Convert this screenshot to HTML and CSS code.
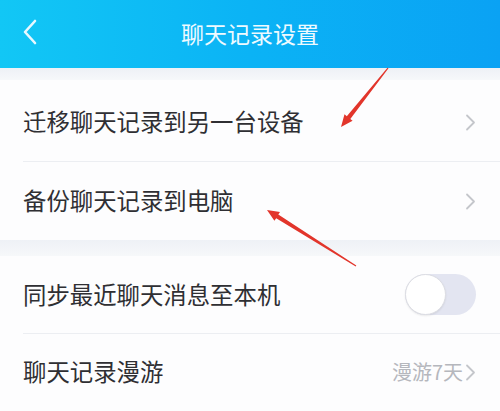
FILE: index.html
```html
<!DOCTYPE html>
<html lang="zh">
<head>
<meta charset="utf-8">
<link rel="stylesheet" href="styles.css">
</head>
<body>
<div class="page">
  <header class="topbar">
    <svg class="back" width="16" height="26" viewBox="0 0 16 26"><path d="M13 2 L3 13 L13 24" fill="none" stroke="#e8f8ff" stroke-width="2.6" stroke-linecap="round" stroke-linejoin="round"/></svg>
    <h1 class="title">聊天记录设置</h1>
  </header>
  <div class="gap gap-top"></div>
  <section class="group">
    <div class="row row-1">
      <span class="label">迁移聊天记录到另一台设备</span>
      <svg class="chev" width="11" height="17" viewBox="0 0 11 17"><path d="M2 1.5 L9 8.5 L2 15.5" fill="none" stroke="#c4c6cb" stroke-width="1.8" stroke-linecap="round" stroke-linejoin="round"/></svg>
    </div>
    <div class="row row-2">
      <span class="label">备份聊天记录到电脑</span>
      <svg class="chev" width="11" height="17" viewBox="0 0 11 17"><path d="M2 1.5 L9 8.5 L2 15.5" fill="none" stroke="#c4c6cb" stroke-width="1.8" stroke-linecap="round" stroke-linejoin="round"/></svg>
    </div>
  </section>
  <div class="gap gap-mid"></div>
  <section class="group">
    <div class="row row-3">
      <span class="label">同步最近聊天消息至本机</span>
      <span class="toggle"><span class="knob"></span></span>
    </div>
    <div class="row row-4">
      <span class="label">聊天记录漫游</span>
      <span class="value">漫游7天</span>
      <svg class="chev chev-small" width="11" height="17" viewBox="0 0 11 17"><path d="M2 1.5 L9 8.5 L2 15.5" fill="none" stroke="#c4c6cb" stroke-width="1.8" stroke-linecap="round" stroke-linejoin="round"/></svg>
    </div>
  </section>
  <svg class="marks" width="500" height="411" viewBox="0 0 500 411">
    <polygon points="388.5,68.3 350.3,118.9 352.6,120.8 341,127 344.5,114.3 346.8,116.3 387.5,67.7" fill="#e2352b"/>
    <polygon points="356.3,265.6 278.3,214.5 280,212 267,210 274.4,220.8 276.2,218.2 355.7,266.4" fill="#e2352b"/>
  </svg>
</div>
</body>
</html>
```
FILE: styles.css
```css
* { box-sizing: border-box; margin: 0; padding: 0; }
html, body { width: 500px; height: 411px; overflow: hidden; background: #ffffff; }
body { font-family: "Noto Sans CJK SC", "Noto Sans", sans-serif; }
.page { position: relative; width: 500px; height: 411px; display: flex; flex-direction: column; background: #fdfdfe; }
.topbar {
  height: 68px;
  flex: none;
  display: flex;
  align-items: center;
  justify-content: center;
  position: relative;
  background: linear-gradient(90deg, #12c7f5 0%, #0bb3f5 50%, #0aa2f4 100%);
}
.back { position: absolute; left: 22px; top: 19px; }
.title { font-size: 23px; font-weight: 400; color: #eefaff; letter-spacing: 0; line-height: 1; margin-top: -2px; }
.gap { flex: none; background: linear-gradient(180deg, #eef1f6, #f6f8fa); }
.gap-top { height: 12px; }
.gap-mid { height: 16px; }
.group { background: #fdfdfe; }
.row { display: flex; align-items: center; padding: 0 23px 0 23px; position: relative; }
.row-1 { height: 81px; padding-top: 3px; }
.row-2 { height: 79px; border-top: 1px solid #eceef2; margin-left: 23px; padding-left: 0; }
.row-3 { height: 77px; }
.row-4 { height: 77px; border-top: 1px solid #eceef2; margin-left: 23px; padding-left: 0; }
.label { font-size: 23.4px; color: #2f2f33; flex: 1; line-height: 1; }
.chev { flex: none; margin-right: 1px; }
.toggle { flex: none; width: 71px; height: 41px; border-radius: 21px; background: #e3e5f1; position: relative; margin-right: 1px; }
.knob { position: absolute; left: 0; top: 0; width: 41px; height: 41px; border-radius: 50%; background: #ffffff; border: 1px solid #dcdde3; box-shadow: 0 1px 2px rgba(0,0,0,0.08); }
.value { font-size: 20px; color: #b5b7bd; margin-right: 2px; line-height: 1; }
.chev-small { margin-left: 0; }
.marks { position: absolute; left: 0; top: 0; pointer-events: none; }
```
